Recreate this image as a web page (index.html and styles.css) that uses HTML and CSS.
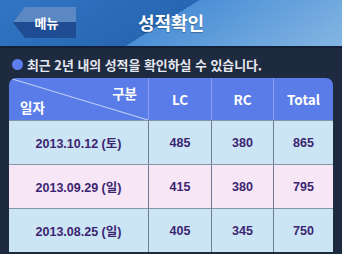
FILE: index.html
```html
<!DOCTYPE html>
<html lang="ko">
<head>
    <meta charset="UTF-8">
    <meta name="viewport" content="width=device-width, initial-scale=1.0">
    <title>성적확인</title>
    <link rel="stylesheet" href="styles.css">
</head>
<body>
    <div class="topbar">
        <a href="#" class="btn-menu"><span>메뉴</span></a>
        <h1>성적확인</h1>
    </div>

    <p class="notice"><span class="dot"></span>최근 2년 내의 성적을 확인하실 수 있습니다.</p>

    <!-- 성적 목록 -->
    <table class="score">
        <thead>
            <tr>
                <th class="col-date">
                    <span class="lbl-kind">구분</span>
                    <span class="lbl-date">일자</span>
                </th>
                <th>LC</th>
                <th>RC</th>
                <th>Total</th>
            </tr>
        </thead>
        <tbody>
            <tr class="row-blue">
                <td>2013.10.12 (토)</td>
                <td>485</td>
                <td>380</td>
                <td>865</td>
            </tr>
            <tr class="row-pink">
                <td>2013.09.29 (일)</td>
                <td>415</td>
                <td>380</td>
                <td>795</td>
            </tr>
            <tr class="row-blue">
                <td>2013.08.25 (일)</td>
                <td>405</td>
                <td>345</td>
                <td>750</td>
            </tr>
        </tbody>
    </table>
</body>
</html>
```

FILE: styles.css
```css
:root {
    --bg-page: #1d2a40;
    --bar-light: #4b8fd6;
    --head-blue: #5a7ce8;
    --row-blue: #cce5f5;
    --row-pink: #f6e6f6;
    --text-purple: #3b2470;
    --line-gray: #8795a8;
}

* {
    margin: 0;
    padding: 0;
    box-sizing: border-box;
}

body {
    background-color: var(--bg-page);
    font-family: "Liberation Sans", "Noto Sans CJK KR", sans-serif;
    width: 342px;
    height: 254px;
    overflow: hidden;
}

.topbar {
    display: grid;
    grid-template-columns: 1fr auto 1fr;
    align-items: center;
    height: 48px;
    padding-bottom: 2px;
    background: linear-gradient(148deg, #3176c4 0%, #2766b2 48%, var(--bar-light) 48%, #84b6e3 100%);
    border-bottom: 2px solid #132038;
}

.btn-menu {
    display: flex;
    align-items: center;
    justify-content: center;
    width: 63px;
    height: 31px;
    padding: 0 4px 0 8px;
    margin: 1px 0 0 13px;
    background: linear-gradient(180deg, #5b87c2 0 50%, #1f4c93 50% 100%);
    clip-path: polygon(12px 0, 100% 0, 100% 100%, 12px 100%, 0 50%);
    color: #fff;
    font-family: "Noto Sans CJK KR", sans-serif;
    font-weight: bold;
    font-size: 13px;
    text-decoration: none;
}

.topbar h1 {
    color: #fff;
    font-family: "Noto Sans CJK KR", sans-serif;
    font-size: 18px;
    font-weight: bold;
    text-shadow: 0 1px 1px rgba(0,0,0,0.3);
}

.notice {
    display: flex;
    align-items: center;
    gap: 4px;
    margin: 7px 0 0 12px;
    height: 18px;
    color: #e6e8ef;
    font-family: "Noto Sans CJK KR", sans-serif;
    font-weight: bold;
    font-size: 12.9px;
}

.dot {
    width: 11px;
    height: 11px;
    border-radius: 50%;
    background-color: #5d7ef0;
}

.score {
    margin: 5px 0 0 9px;
    width: 324px;
    border-collapse: separate;
    border-spacing: 0;
    table-layout: fixed;
}

.score th {
    height: 42px;
    background-color: var(--head-blue);
    color: #fff;
    font-family: "Noto Sans CJK KR", sans-serif;
    font-size: 13.5px;
    font-weight: bold;
    border-left: 1px solid #8aa0ee;
}

.score th:first-child {
    width: 139px;
    border-left: none;
    border-top-left-radius: 7px;
}

.score th:nth-child(2) { width: 63px; }
.score th:nth-child(3) { width: 62px; }

.score th:last-child {
    border-top-right-radius: 7px;
}

.col-date {
    position: relative;
    background: linear-gradient(to top right, transparent calc(50% - 1px), #c4d0f8 50%, transparent calc(50% + 1px)), var(--head-blue);
}

.lbl-kind {
    position: absolute;
    top: 5px;
    right: 11px;
}

.lbl-date {
    position: absolute;
    left: 11px;
    bottom: 3px;
}

.score td {
    height: 44px;
    text-align: center;
    color: var(--text-purple);
    font-size: 12.5px;
    font-weight: bold;
    border-top: 1px solid var(--line-gray);
    border-left: 1px solid #6e7d92;
}

.score td:first-child {
    border-left: none;
}

.row-blue td {
    background-color: var(--row-blue);
}

.row-pink td {
    background-color: var(--row-pink);
}
```
